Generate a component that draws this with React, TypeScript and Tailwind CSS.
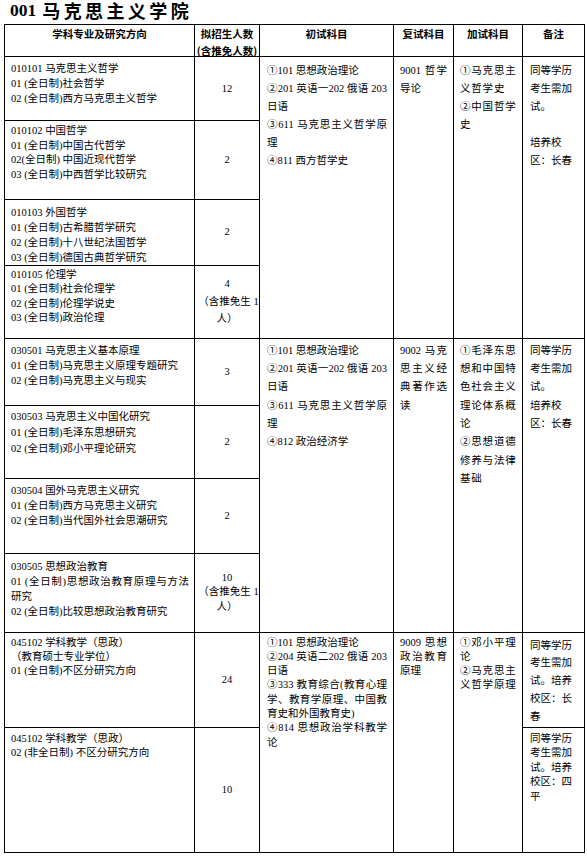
import React from "react";

type CellLines = string[];

function Lines({ lines }: { lines: CellLines }) {
  return (
    <>
      {lines.map((l, i) => {
        const j = l.startsWith("^");
        const t = j ? l.slice(1) : l;
        return (
          <div
            key={i}
            className={j ? "text-justify [text-align-last:justify] whitespace-nowrap" : "whitespace-nowrap"}
          >
            {t === "" ? "\u00a0" : t}
          </div>
        );
      })}
    </>
  );
}

const td = "border border-black align-top";
const th = "border border-black align-top p-0 font-[family-name:Noto_Sans_CJK_SC,sans-serif]";

export default function App() {
  return (
    <div className="w-[587px] h-[856px] bg-white text-black text-[10.5px] font-[family-name:Liberation_Serif,Noto_Sans_CJK_SC,serif]">
      <div className="h-[24px] pl-[10px] pt-[1px] flex items-start leading-[19px] font-bold">
        <span className="text-[17.5px]">001</span>
        <span className="ml-[6px] text-[18px] tracking-[3.4px] font-[family-name:Noto_Sans_CJK_SC,sans-serif]">
          马克思主义学院
        </span>
      </div>
      <div className="pl-[4px]">
        <table className="w-[580px] table-fixed border-collapse">
          <colgroup>
            <col className="w-[190px]" />
            <col className="w-[65px]" />
            <col className="w-[134px]" />
            <col className="w-[60px]" />
            <col className="w-[69px]" />
            <col className="w-[62px]" />
          </colgroup>
          <tbody>
            <tr className="h-[32px] font-bold text-center">
              <th className={th}>
                <div className="h-[30px] leading-[17px]">学科专业及研究方向</div>
              </th>
              <th className={th}>
                <div className="h-[30px] leading-[17px]">
                  <div>拟招生人数</div>
                  <div>(含推免人数)</div>
                </div>
              </th>
              <th className={th}>
                <div className="h-[30px] leading-[17px]">初试科目</div>
              </th>
              <th className={th}>
                <div className="h-[30px] leading-[17px]">复试科目</div>
              </th>
              <th className={th}>
                <div className="h-[30px] leading-[17px]">加试科目</div>
              </th>
              <th className={th}>
                <div className="h-[30px] leading-[17px]">备注</div>
              </th>
            </tr>

            {/* Group 1 */}
            <tr className="h-[64px]">
              <td className={`${td} pl-[6px] pt-[4px] leading-[15px]`}>
                <Lines lines={["010101 马克思主义哲学", "01 (全日制)社会哲学", "02 (全日制)西方马克思主义哲学"]} />
              </td>
              <td className="border border-black align-middle text-center">12</td>
              <td rowSpan={4} className={`${td} pl-[7px] pr-[6px] pt-[4.5px] leading-[18px]`}>
                <Lines lines={["①101 思想政治理论", "^②201 英语一202 俄语 203", "日语", "^③611 马克思主义哲学原", "理", "④811 西方哲学史"]} />
              </td>
              <td rowSpan={4} className={`${td} pl-[6px] pr-[6px] pt-[4.5px] leading-[18px]`}>
                <Lines lines={["^9001 哲学", "导论"]} />
              </td>
              <td rowSpan={4} className={`${td} pl-[6px] pr-[4px] pt-[4.5px] leading-[18px] tracking-[0.8px]`}>
                <Lines lines={["①马克思主", "义哲学史", "②中国哲学", "史"]} />
              </td>
              <td rowSpan={4} className={`${td} pl-[7px] pr-[4px] pt-[4.5px] leading-[18px]`}>
                <Lines lines={["同等学历", "考生需加", "试。", "", "培养校", "区：长春"]} />
              </td>
            </tr>
            <tr className="h-[79px]">
              <td className={`${td} pl-[6px] pt-[3.25px] leading-[14.5px]`}>
                <Lines lines={["010102 中国哲学", "01 (全日制)中国古代哲学", "02(全日制) 中国近现代哲学", "03 (全日制)中西哲学比较研究"]} />
              </td>
              <td className="border border-black align-middle text-center">2</td>
            </tr>
            <tr className="h-[65px]">
              <td className={`${td} pl-[6px] pt-[4.5px] leading-[15px]`}>
                <Lines lines={["010103 外国哲学", "01 (全日制)古希腊哲学研究", "02 (全日制)十八世纪法国哲学", "03 (全日制)德国古典哲学研究"]} />
              </td>
              <td className="border border-black align-middle text-center">2</td>
            </tr>
            <tr className="h-[73px]">
              <td className={`${td} pl-[6px] pt-[2.25px] leading-[14.5px]`}>
                <Lines lines={["010105 伦理学", "01 (全日制)社会伦理学", "02 (全日制)伦理学说史", "03 (全日制)政治伦理"]} />
              </td>
              <td className="border border-black align-middle text-center leading-[17.5px]">
                <div>4</div>
                <div className="pl-[3px]">（含推免生 1</div>
                <div>人）</div>
              </td>
            </tr>

            {/* Group 2 */}
            <tr className="h-[67px]">
              <td className={`${td} pl-[6px] pt-[4.3px] leading-[15px]`}>
                <Lines lines={["030501 马克思主义基本原理", "01 (全日制)马克思主义原理专题研究", "02 (全日制)马克思主义与现实"]} />
              </td>
              <td className="border border-black align-middle text-center">3</td>
              <td rowSpan={4} className={`${td} pl-[7px] pr-[6px] pt-[3.4px] leading-[18.3px]`}>
                <Lines lines={["①101 思想政治理论", "^②201 英语一202 俄语 203", "日语", "^③611 马克思主义哲学原", "理", "④812 政治经济学"]} />
              </td>
              <td rowSpan={4} className={`${td} pl-[6px] pr-[6px] pt-[3.4px] leading-[18.3px]`}>
                <Lines lines={["^9002 马克", "^思主义经", "^典著作选", "读"]} />
              </td>
              <td rowSpan={4} className={`${td} pl-[6px] pr-[4px] pt-[3.4px] leading-[18.3px] tracking-[0.8px]`}>
                <Lines lines={["①毛泽东思", "想和中国特", "色社会主义", "理论体系概", "论", "②思想道德", "修养与法律", "基础"]} />
              </td>
              <td rowSpan={4} className={`${td} pl-[7px] pr-[4px] pt-[3.4px] leading-[18.3px]`}>
                <Lines lines={["同等学历", "考生需加", "试。", "培养校", "区：长春"]} />
              </td>
            </tr>
            <tr className="h-[73px]">
              <td className={`${td} pl-[6px] pt-[3.6px] leading-[15.8px]`}>
                <Lines lines={["030503 马克思主义中国化研究", "01 (全日制)毛泽东思想研究", "02 (全日制)邓小平理论研究"]} />
              </td>
              <td className="border border-black align-middle text-center">2</td>
            </tr>
            <tr className="h-[75px]">
              <td className={`${td} pl-[6px] pt-[4px] leading-[15px]`}>
                <Lines lines={["030504 国外马克思主义研究", "01 (全日制)西方马克思主义研究", "02 (全日制)当代国外社会思潮研究"]} />
              </td>
              <td className="border border-black align-middle text-center">2</td>
            </tr>
            <tr className="h-[79px]">
              <td className={`${td} pl-[6px] pr-[5px] pt-[5px] leading-[15px]`}>
                <Lines lines={["030505 思想政治教育", "^01 (全日制)思想政治教育原理与方法", "研究", "02 (全日制)比较思想政治教育研究"]} />
              </td>
              <td className="border border-black align-middle text-center leading-[14.5px]">
                <div>10</div>
                <div className="pl-[3px]">（含推免生 1</div>
                <div>人）</div>
              </td>
            </tr>

            {/* Group 3 */}
            <tr className="h-[95px]">
              <td className={`${td} pl-[6px] pt-[3.1px] leading-[14.2px]`}>
                <Lines lines={["045102 学科教学（思政）", "（教育硕士专业学位）", "01 (全日制)不区分研究方向"]} />
              </td>
              <td className="border border-black align-middle text-center">24</td>
              <td rowSpan={2} className={`${td} pl-[7px] pr-[6px] pt-[3px] leading-[14.3px]`}>
                <Lines lines={["①101 思想政治理论", "^②204 英语二202 俄语 203", "日语", "^③333 教育综合(教育心理", "^学、教育学原理、中国教", "育史和外国教育史)", "^④814 思想政治学科教学", "论"]} />
              </td>
              <td rowSpan={2} className={`${td} pl-[6px] pr-[6px] pt-[3px] leading-[14.3px]`}>
                <Lines lines={["^9009 思想", "^政治教育", "原理"]} />
              </td>
              <td rowSpan={2} className={`${td} pl-[6px] pr-[4px] pt-[3px] leading-[14.3px] tracking-[0.8px]`}>
                <Lines lines={["①邓小平理", "论", "②马克思主", "义哲学原理"]} />
              </td>
              <td className={`${td} pl-[7px] pr-[4px] pt-[4px] leading-[17.8px]`}>
                <Lines lines={["同等学历", "考生需加", "试。培养", "校区：长", "春"]} />
              </td>
            </tr>
            <tr className="h-[125px]">
              <td className={`${td} pl-[6px] pt-[4.5px] leading-[14px]`}>
                <Lines lines={["045102 学科教学（思政）", "02 (非全日制) 不区分研究方向"]} />
              </td>
              <td className="border border-black align-middle text-center">10</td>
              <td className={`${td} pl-[7px] pr-[4px] pt-[4.25px] leading-[14.5px]`}>
                <Lines lines={["同等学历", "考生需加", "试。培养", "校区：四", "平"]} />
              </td>
            </tr>
          </tbody>
        </table>
      </div>
    </div>
  );
}
